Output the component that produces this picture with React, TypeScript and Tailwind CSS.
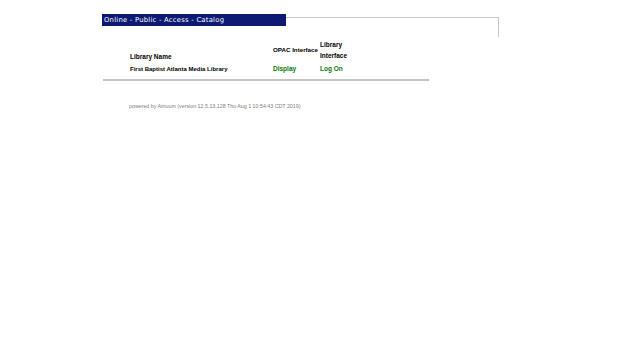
export default function App() {
  return (
    <div className="min-h-[343px] w-[620px] bg-white pl-[102px] pt-[14px] font-['Liberation_Sans',Arial,sans-serif]">
      {/* header strip */}
      <div className="flex items-start">
        <div className="flex h-[12px] w-[184px] items-center bg-[#0c1a73] pl-[2px] font-['DejaVu_Sans',Verdana,sans-serif] text-[6.8px] leading-none tracking-[0.25px] text-white">
          Online - Public - Access - Catalog
        </div>
        <div className="mt-[2.5px] h-[20px] w-[213px] border-t-[1.5px] border-r-[1.5px] border-[#c8c8c8]" />
      </div>

      {/* libraries table */}
      <div className="ml-[1px] w-[326px]">
        <div className="grid grid-cols-[143px_47px_auto] items-baseline pl-[27px] pt-[2px] text-[6.5px] font-bold leading-[11px] text-black">
          <div className="self-end translate-y-[1px]">Library Name</div>
          <div className="self-center whitespace-nowrap text-[6.2px]">OPAC Interface</div>
          <div>
            Library
            <br />
            Interface
          </div>
          <div className="pt-[2px] text-[6px]">First Baptist Atlanta Media Library</div>
          <div className="pt-[2px] text-[#0a7a0a]">Display</div>
          <div className="pt-[2px] text-[#0a7a0a]">Log On</div>
        </div>
        <div className="mt-[4px] h-[2px] bg-[#c4c4c4]" />
      </div>

      <div className="pl-[27px] pt-[23px] text-[5.3px] leading-none text-[#808080]">
        powered by Atriuum (version 12.5.13.128 Thu Aug 1 10:54:43 CDT 2019)
      </div>
    </div>
  );
}
